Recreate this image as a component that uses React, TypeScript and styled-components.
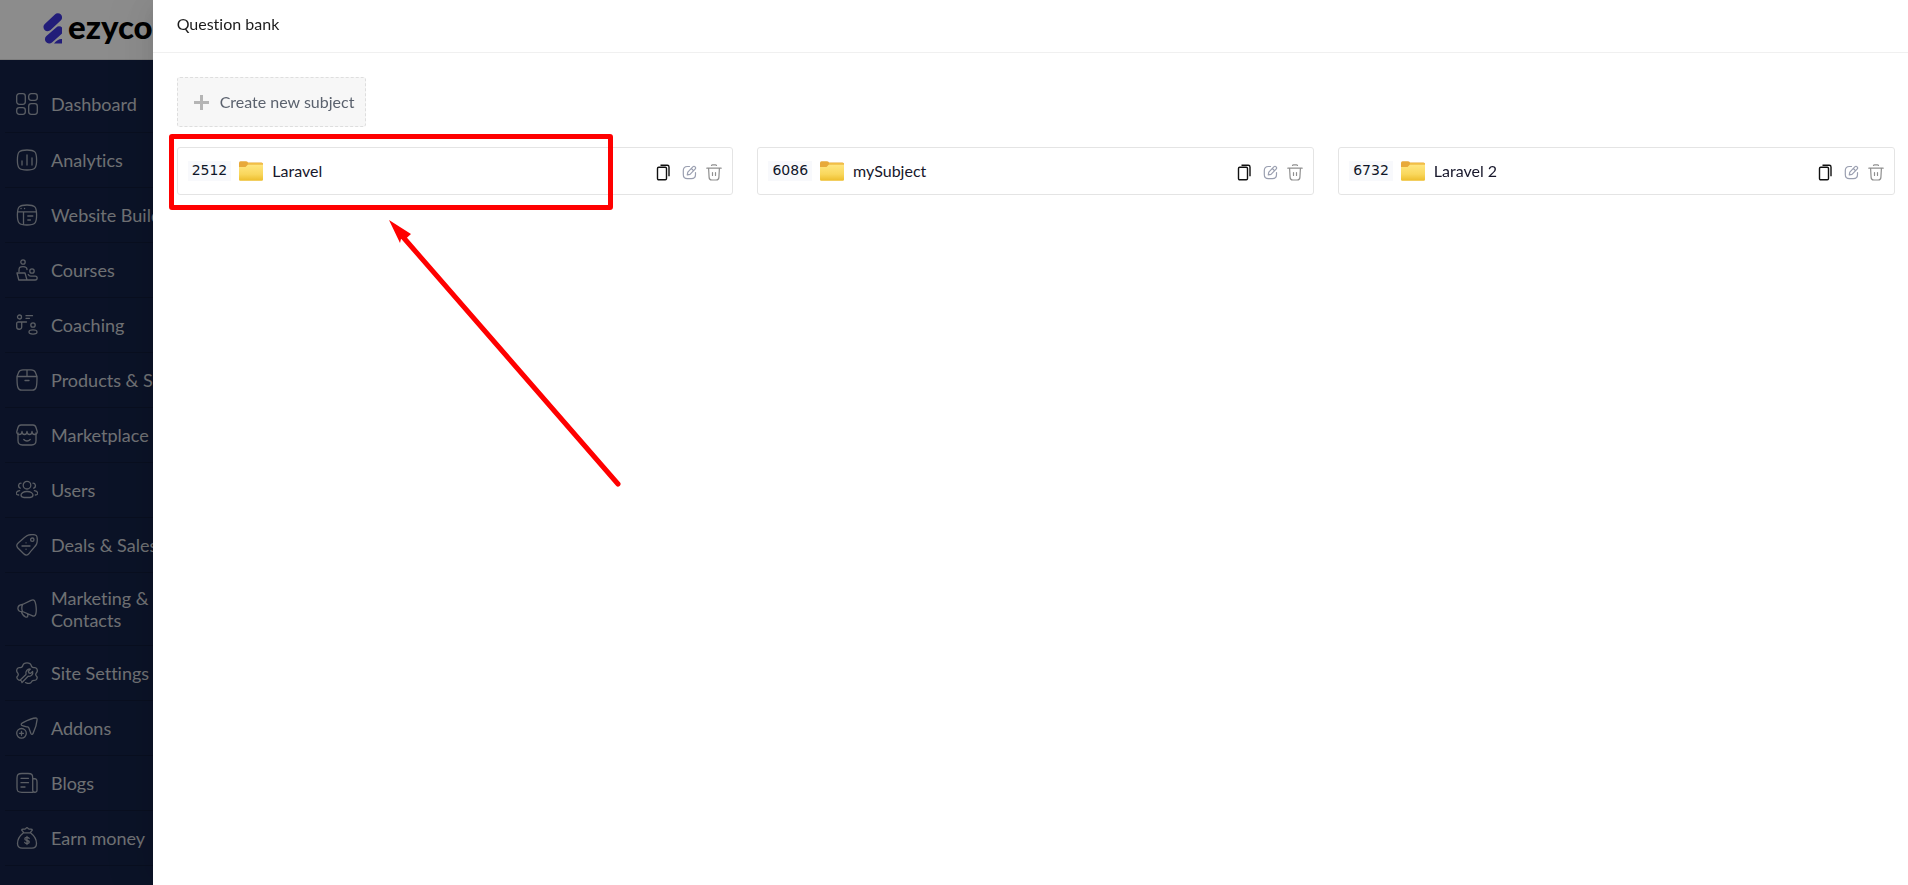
import React from "react";
import styled, { createGlobalStyle } from "styled-components";

const GlobalStyle = createGlobalStyle`
  *, *::before, *::after { box-sizing: border-box; }
  body {
    margin: 0;
    background: #ffffff;
    font-family: "Lato", "Noto Sans", sans-serif;
    font-variant-ligatures: none;
    overflow: hidden;
  }
`;

/* ---------- Sidebar ---------- */

const Shell = styled.div`
  display: flex;
  height: 100vh;
  overflow: hidden;
`;

const Sidebar = styled.aside`
  display: flex;
  flex-direction: column;
  flex: none;
  width: 240px;
  background: #142247;
`;

const LogoBar = styled.a`
  display: flex;
  align-items: center;
  flex: none;
  gap: 5px;
  height: 60px;
  padding: 0 0 4px 43px;
  background: #ffffff;
  border-bottom: 1px solid #e4e4e4;
  color: #000000;
  text-decoration: none;
`;

const LogoText = styled.span`
  padding-bottom: 4px;
  font-size: 33px;
  line-height: 36px;
  font-weight: 900;
`;

const NavList = styled.ul`
  flex: 1;
  margin: 0;
  padding: 16px 5px 0;
  list-style: none;
`;

const NavItem = styled.li`
  border-bottom: 1px solid #101b39;

  &:first-child a {
    min-height: 56px;
  }
`;

const NavLink = styled.a`
  display: flex;
  align-items: center;
  gap: 13px;
  min-height: 54px;
  padding: 14px 60px 14px 11px;
  color: #c9ccd2;
  font-size: 18px;
  line-height: 22px;
  text-decoration: none;

  svg {
    flex: none;
    opacity: 0.8;
  }
`;

const NavLabel = styled.span<{ $wrap?: boolean }>`
  white-space: ${(p) => (p.$wrap ? "normal" : "nowrap")};
`;

/* ---------- Drawer ---------- */

const Backdrop = styled.div`
  position: fixed;
  inset: 0;
  background: rgba(0, 0, 0, 0.45);
`;

const Drawer = styled.section`
  position: fixed;
  top: 0;
  right: 0;
  bottom: 0;
  width: 92%;
  background: #ffffff;
  box-shadow: -6px 0 16px -8px rgba(0, 0, 0, 0.08), -9px 0 28px 0 rgba(0, 0, 0, 0.05),
    -12px 0 48px 16px rgba(0, 0, 0, 0.03);
`;

const DrawerHeader = styled.header`
  height: 53px;
  padding: 12px 24px;
  border-bottom: 1px solid #f0f0f0;
`;

const DrawerTitle = styled.h1`
  margin: 0;
  color: #1c1c1c;
  font-size: 16px;
  line-height: 24px;
  font-weight: 400;
`;

const DrawerBody = styled.div`
  display: flex;
  flex-direction: column;
  align-items: flex-start;
  gap: 20px;
  padding: 24px 13px 24px 24px;
`;

const CreateButton = styled.button`
  display: flex;
  align-items: center;
  gap: 10px;
  height: 50px;
  padding: 0 11px 0 15px;
  background: #f7f7f7;
  border: 1px dashed #dedede;
  border-radius: 3px;
  color: #5b626e;
  font-family: inherit;
  font-size: 16px;
  line-height: 24px;
  cursor: pointer;
`;

const SubjectGrid = styled.div`
  display: grid;
  grid-template-columns: repeat(3, 1fr);
  gap: 24px;
  width: 100%;
`;

const SubjectCard = styled.article`
  position: relative;
  display: flex;
  align-items: center;
  height: 48px;
  padding: 0 10px;
  background: #ffffff;
  border: 1px solid #e4e4e4;
  border-radius: 3px;
`;

const SubjectId = styled.code`
  padding: 0 4px 2px;
  background: #f8f9fc;
  color: #0f1629;
  font-family: "DejaVu Sans", sans-serif;
  font-size: 14px;
  line-height: 18px;
`;

const SubjectLink = styled.a`
  display: flex;
  align-items: center;
  gap: 9px;
  flex: 1;
  margin-left: 8px;
  color: #17172b;
  font-size: 16px;
  line-height: 24px;
  text-decoration: none;
`;

const Actions = styled.div`
  display: flex;
  align-items: center;
  gap: 9px;
  padding-top: 2px;
`;

const ActionButton = styled.button<{ $color: string }>`
  display: flex;
  padding: 0;
  border: 0;
  background: none;
  color: ${(p) => p.$color};
  cursor: pointer;
`;

/* ---------- Tutorial callout ---------- */

const CalloutBox = styled.div`
  position: absolute;
  top: -14px;
  left: -9px;
  width: 444px;
  height: 76px;
  border: 5px solid #ff0000;
  border-radius: 3px;
  pointer-events: none;
`;

const CalloutArrow = styled.svg`
  position: absolute;
  top: 72px;
  left: 211px;
  pointer-events: none;
`;

/* ---------- Icons ---------- */

const Line = ({ children, size = 22 }: { children: React.ReactNode; size?: number }) => (
  <svg
    width={size}
    height={size}
    viewBox="0 0 22 22"
    fill="none"
    stroke="currentColor"
    strokeWidth="1.3"
    strokeLinecap="round"
    strokeLinejoin="round"
    aria-hidden="true"
  >
    {children}
  </svg>
);

const icons: Record<string, React.ReactNode> = {
  dashboard: (
    <>
      <rect x="0.7" y="0.7" width="8.6" height="10.6" rx="2.5" />
      <rect x="12.7" y="0.7" width="8.6" height="6.6" rx="2.5" />
      <rect x="0.7" y="14.7" width="8.6" height="6.6" rx="2.5" />
      <rect x="12.7" y="10.7" width="8.6" height="10.6" rx="2.5" />
    </>
  ),
  analytics: (
    <>
      <path d="M11 1c8 0 9.600 1.700 9.600 10S19 21 11 21 1.400 19.300 1.400 11 3 1 11 1Z" />
      <path d="M6 12v4M11 6v10M16 9v7" />
    </>
  ),
  website: (
    <>
      <path d="M11 1c8 0 9.600 1.700 9.600 10S19 21 11 21 1.400 19.300 1.400 11 3 1 11 1Z" />
      <path d="M2 7.800h18M7.500 7.800v12.500M11.800 12h5M11.800 16h2.600M5 4.500h.1M8.500 4.500h.1" />
    </>
  ),
  courses: (
    <>
      <circle cx="7" cy="3" r="2.200" />
      <path d="M3 12.500V11c0-2.500 1-3.400 4-3.400s4 .9 4 3" />
      <path d="M1 14h8l2 7H2.800zM11 21h8.200c2.600 0 2.600-3.800 0-3.800h-4.400c-1.300 0-2-.5-2.500-1.600" />
      <circle cx="16" cy="12" r="2.200" />
    </>
  ),
  coaching: (
    <>
      <circle cx="3.500" cy="3" r="2" />
      <path d="M10.500 8H2.500C1.200 8 .7 8.500.7 9.700V13c0 3 5 3 5 0V8M10 1.700h6.500M10 4.300h3.500" />
      <circle cx="17" cy="11" r="2.200" />
      <ellipse cx="17" cy="18" rx="4" ry="2.100" />
    </>
  ),
  products: (
    <>
      <path d="M1 7.500c0 9 .2 13.700 4.800 13.700h10.400C20.800 21.200 21 16.500 21 7.500L19.300 3.200C18.500 1.200 17 .8 15 .8H7C5 .8 3.500 1.200 2.700 3.200zM1 7.500h20M11 .8v6.500M9 11.500h4" />
    </>
  ),
  market: (
    <>
      <path d="M2 9v7.500C2 20 3.300 21 6.500 21h9c3.200 0 4.500-1 4.500-4.500V9" />
      <path d="M5 1h12c1.700 0 2.500.7 3 2.500l1.200 4c.3 1.700-.8 3-2.500 3S16 9.500 16 7.500c0 2-1 3-2.500 3S11 9.500 11 7.500c0 2-1 3-2.500 3S6 9.500 6 7.500c0 2-1 3-2.700 3S.5 9.200.8 7.500l1.200-4C2.500 1.700 3.300 1 5 1ZM7.800 15.500c1.800 2 4.600 2 6.400 0" />
    </>
  ),
  users: (
    <>
      <circle cx="11" cy="6.200" r="3.800" />
      <path d="M11 12.500c-3.600 0-6 1.700-6 3.600 0 1.600 1.400 2.400 3 2.400h6c1.600 0 3-.8 3-2.400 0-1.900-2.400-3.600-6-3.600ZM5 4.200c-2.500 0-3.500 3.600-.8 5M17 4.200c2.500 0 3.500 3.600.8 5M3.600 11.600C.6 12 0 14 .3 14.700c.3.900 1.400 1.300 2.400 1.300M18.400 11.600c3 .4 3.600 2.400 3.300 3.100-.3.900-1.400 1.300-2.400 1.300" />
    </>
  ),
  deals: (
    <>
      <path d="M12.200 1.200c3-1.200 7.300-.6 8.200.4s1.300 5 .3 8.200c-.8 2.400-4.500 5.500-7.500 9.500-1.800 2.300-3.600 2.200-5.500.4L1.900 14c-1.700-1.900-1.400-3.800.8-5.500 3.800-3 6.800-6.300 9.500-7.300Z" />
      <circle cx="16.300" cy="5.700" r="1.700" />
      <path d="M6 12h8M10 8.800h.1M10 15.200h.1" />
    </>
  ),
  marketing: (
    <>
      <path d="M6.500 6.500 15 2.300c3.500-1.600 4.200.8 4.800 4.400.7 4 .7 6.600 0 9.300-.5 2-1.700 2.600-3.800 1.600L6.500 13.500c-5.700 1.200-6.500-6.500 0-7ZM6.500 6.500c-1 2.500-1 4.500 0 7M5.500 13.600c.3 2.200 1.500 4 4 5.400 1.700.7 3-.6 2-3.200" />
    </>
  ),
  settings: (
    <>
      <path d="M6 20.500c-.5-2-1.600-2.600-3-2.200-1.800-1-2.400-2.300-2-3.600 1.600-1.200 1.600-2.600.5-4C.2 9.400.6 8 1.200 6.800c.5-1 1.500-1.400 2.600-1.200 1.800.2 2.700-.5 3-2.200.5-1.800 1.700-2.500 4.200-2.500s3.700.7 4.200 2.500c.3 1.700 1.200 2.400 3 2.200 1.100-.2 2.100.2 2.600 1.200.6 1.200 1 2.600-.3 3.900-1.100 1.400-1.100 2.800.5 4 .4 1.300-.2 2.600-1.200 3.300-1 .6-2.300.1-3.200.6-1 .5-1.200 2.300-2.500 2.600-1.400.3-3.500.3-4.600-.6" />
      <path d="M4.500 17.700 10 12.500c-.8-3.500 1.400-5.900 4.400-5.400L12.300 9.200l.7 1.800 1.700.4 1.900-2c.8 3-1.500 5.300-4.500 4.800L6.500 20" />
    </>
  ),
  addons: (
    <>
      <path d="M5.500 8.200c-.7-1-.2-1.700 1.500-2.600C11 3.400 16 1 20 1c1 .1 1.200.6 1.100 1.600-.3 4.200-2 9.600-4 13.800-.7 1.400-1.800 1.200-2.300-.1l-1.800-5.100c-.3-.8-.7-1.100-1.500-1.300-2-.5-4.500-.8-6-1.700Z" />
      <circle cx="5.500" cy="16.300" r="4.800" />
      <path d="M3.500 16.300h4M5.500 14.300v4" />
    </>
  ),
  blogs: (
    <>
      <path d="M17 20.300H6C2 20.300 1 19.400 1 15.500V6.300C1 2.400 2 1.500 6 1.500h6c4 0 4.700.9 4.700 4.800v12c0 2.500 4.300 2.700 4.300 0V10c0-2.700-.7-3.500-4.300-3.500M5 6.300h7.500M5 10.700h7.500M5 15h4" />
    </>
  ),
  money: (
    <>
      <path d="M7.500 5.800h7C19 9.400 20.500 13 20.500 16.500c0 3.300-2 4.700-4.700 4.700H6.200c-2.700 0-4.700-1.400-4.700-4.700C1.500 13 3 9.400 7.500 5.800ZM7.500 5.500C7 4.200 5 3.300 6 2.400c1-.7 2.200.1 3.200-.4C10 1.600 10.100.7 11 .7s1 .9 1.800 1.300c1 .5 2.200-.3 3.200.4 1 .9-1 1.800-1.500 3.100" />
      <path d="M13.200 11.500c-.5-1.600-4.400-1.500-4.400.4 0 2.200 4.500 1 4.500 3.200 0 1.900-4.100 2-4.600.2M11 9.500v8" />
    </>
  ),
};

const LogoMark = () => (
  <svg width="20" height="32" viewBox="0 0 20 32" aria-hidden="true">
    <defs>
      <clipPath id="mark-edge">
        <rect width="19" height="32" />
      </clipPath>
    </defs>
    <g clipPath="url(#mark-edge)" stroke="#3f35dd" strokeWidth="8.500" strokeLinecap="round">
      <path d="M4.700 15 14.800 5.500M6.200 27.200 16 18.600" />
      <path d="M11 31.500q4-5 8-4.500v4.500z" fill="#3f35dd" stroke="none" />
    </g>
  </svg>
);

const PlusIcon = () => (
  <svg width="17" height="17" viewBox="0 0 17 17" aria-hidden="true">
    <path d="M8.500 1v15M1 8.500h15" stroke="#b5b5b5" strokeWidth="3" />
  </svg>
);

const FolderIcon = () => (
  <svg width="24" height="20" viewBox="0 0 24 20" aria-hidden="true">
    <defs>
      <linearGradient id="folder-face" x1="0" y1="0" x2="0" y2="1">
        <stop offset="0" stopColor="#ffe680" />
        <stop offset="0.6" stopColor="#f9d75c" />
        <stop offset="1" stopColor="#edbd2c" />
      </linearGradient>
    </defs>
    <path d="M0 2Q0 .3 1.500.3h5Q8.500.3 9 1.500h13.500Q24 1.500 24 3v5H0z" fill="#e8a93a" />
    <path d="M0 6h6.500L9 3.600h15V18.500q0 1.200-1.200 1.200H1.200Q0 19.700 0 18.500z" fill="url(#folder-face)" />
    <path d="M9 2h13.500q1 0 1.500 1.200H8.700z" fill="#f2bf45" />
  </svg>
);

const CopyIcon = () => (
  <svg width="17" height="17" viewBox="0 0 17 17" fill="none" stroke="currentColor" strokeWidth="1.400" strokeLinejoin="round" aria-hidden="true">
    <rect x="1.500" y="3.200" width="9" height="12.600" rx="1.200" />
    <path d="M4.500 1.200h6.800q1.700 0 1.700 1.700v9.400" />
  </svg>
);

const EditIcon = () => (
  <svg width="15" height="15" viewBox="0 0 15 15" fill="none" stroke="currentColor" strokeWidth="1.200" strokeLinecap="round" strokeLinejoin="round" aria-hidden="true">
    <path d="M7.500 1.500H5.400Q1.300 1.500 1.300 5.600v4q0 4.100 4.100 4.100h4q4.100 0 4.100-4.100V7.500" />
    <path d="m5.300 9.800.5-2.700 5-5.200q1.200-1.200 2.300-.1 1.100 1.200 0 2.300L8 9.300zM9.300 3.500l2.200 2.200" />
  </svg>
);

const TrashIcon = () => (
  <svg width="16" height="17" viewBox="0 0 16 17" fill="none" stroke="currentColor" strokeWidth="1.200" strokeLinecap="round" strokeLinejoin="round" aria-hidden="true">
    <path d="M.8 4.200h14.400M5.500 1.500q.3-.7 1-.7h3q.7 0 1 .7M2.600 4.500l.5 8.900q.2 2.600 2.600 2.600h4.600q2.400 0 2.600-2.600l.5-8.900M6.500 8.500v3M9.500 8.500v3" />
  </svg>
);

/* ---------- Data ---------- */

const navigation = [
  { icon: "dashboard", label: "Dashboard" },
  { icon: "analytics", label: "Analytics" },
  { icon: "website", label: "Website Builder" },
  { icon: "courses", label: "Courses" },
  { icon: "coaching", label: "Coaching" },
  { icon: "products", label: "Products & Services" },
  { icon: "market", label: "Marketplace" },
  { icon: "users", label: "Users" },
  { icon: "deals", label: "Deals & Sales" },
  { icon: "marketing", label: "Marketing & Contacts", wrap: true },
  { icon: "settings", label: "Site Settings" },
  { icon: "addons", label: "Addons" },
  { icon: "blogs", label: "Blogs" },
  { icon: "money", label: "Earn money" },
];

const subjects = [
  { id: 2512, name: "Laravel", highlighted: true },
  { id: 6086, name: "mySubject" },
  { id: 6732, name: "Laravel 2" },
];

const Callout = () => (
  <>
    <CalloutBox />
    <CalloutArrow width="236" height="272" viewBox="0 0 236 272" aria-hidden="true">
      <path d="M14 17 229 264" stroke="#ff0000" strokeWidth="5" strokeLinecap="round" />
      <path d="M0 0 22 14 16.500 19 12 19 11 23z" fill="#ff0000" />
    </CalloutArrow>
  </>
);

export default function App() {
  return (
    <>
      <GlobalStyle />
      <Shell>
        <Sidebar>
          <LogoBar href="#home">
            <LogoMark />
            <LogoText>ezyco</LogoText>
          </LogoBar>
          <NavList>
            {navigation.map((item) => (
              <NavItem key={item.label}>
                <NavLink href={`#${item.icon}`}>
                  <Line>{icons[item.icon]}</Line>
                  <NavLabel $wrap={item.wrap}>{item.label}</NavLabel>
                </NavLink>
              </NavItem>
            ))}
          </NavList>
        </Sidebar>
      </Shell>
      <Backdrop />
      <Drawer role="dialog" aria-labelledby="drawer-title">
        <DrawerHeader>
          <DrawerTitle id="drawer-title">Question bank</DrawerTitle>
        </DrawerHeader>
        <DrawerBody>
          <CreateButton type="button">
            <PlusIcon />
            Create new subject
          </CreateButton>
          <SubjectGrid>
            {subjects.map((subject) => (
              <SubjectCard key={subject.id}>
                <SubjectId>{subject.id}</SubjectId>
                <SubjectLink href={`#subject-${subject.id}`}>
                  <FolderIcon />
                  {subject.name}
                </SubjectLink>
                <Actions>
                  <ActionButton type="button" $color="#111111" aria-label={`Copy ${subject.name}`}>
                    <CopyIcon />
                  </ActionButton>
                  <ActionButton type="button" $color="#9a9fb0" aria-label={`Edit ${subject.name}`}>
                    <EditIcon />
                  </ActionButton>
                  <ActionButton type="button" $color="#8f8f8f" aria-label={`Delete ${subject.name}`}>
                    <TrashIcon />
                  </ActionButton>
                </Actions>
                {subject.highlighted && <Callout />}
              </SubjectCard>
            ))}
          </SubjectGrid>
        </DrawerBody>
      </Drawer>
    </>
  );
}
